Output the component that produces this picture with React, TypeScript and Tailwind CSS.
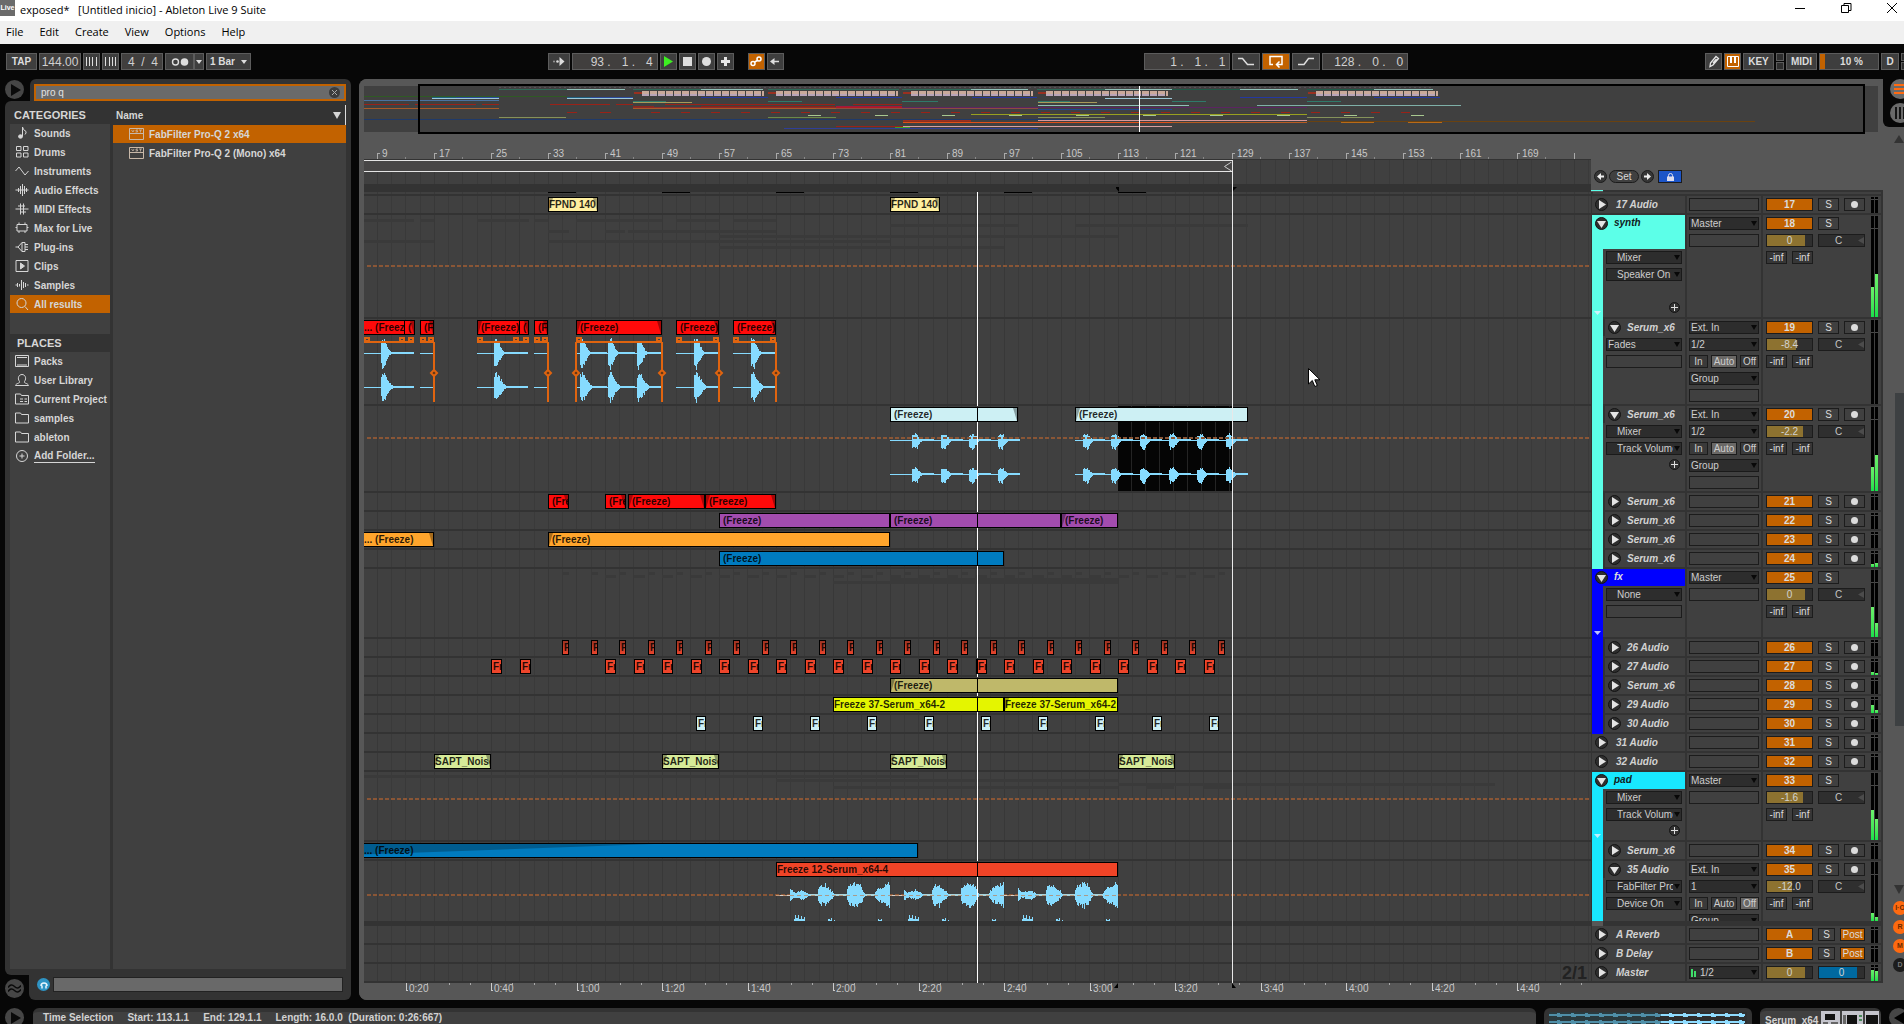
import React from "react";

/* ---------- shared pieces ---------- */

const field =
  "flex h-[13px] shrink-0 items-center justify-center overflow-hidden border border-[#1c1c1c] text-[10px] leading-[11px] whitespace-nowrap";

function Triangle({ dir, className }: { dir: "up" | "down" | "right"; className: string }) {
  const d = { up: "M0 10 5 0 10 10Z", down: "M0 0H10L5 10Z", right: "M0 0 10 5 0 10Z" }[dir];
  return (
    <svg viewBox="0 0 10 10" preserveAspectRatio="none" className={"shrink-0 " + className} fill="currentColor" aria-hidden="true">
      <path d={d} />
    </svg>
  );
}

function Chooser({ value, label, indent, meter }: { value: string; label: string; indent?: boolean; meter?: boolean }) {
  return (
    <div className="relative h-[13px] w-full shrink-0">
      <select
        aria-label={label}
        className={
          "block h-[13px] w-full appearance-none overflow-hidden border border-[#1a1a1a] bg-[#2d2d2d] py-0 pr-2 text-[10px] leading-[11px] text-clip whitespace-nowrap text-[#cdcdcd] " +
          (indent || meter ? "pl-[10px]" : "pl-px")
        }
      >
        <option>{value}</option>
      </select>
      {meter && (
        <span className="pointer-events-none absolute bottom-0.5 left-0.5 flex items-end gap-px">
          <span className="h-2 w-0.5 bg-[#3fdc6a]" />
          <span className="h-1.5 w-0.5 bg-[#3fdc6a]" />
        </span>
      )}
      <Triangle dir="down" className="pointer-events-none absolute top-1 right-0.5 h-[5px] w-[6px] text-[#080808]" />
    </div>
  );
}

/* ---------- title, menu, transport ---------- */

function TitleBar() {
  return (
    <header className="flex h-[21px] shrink-0 items-start bg-white text-black">
      <span className="flex h-4 w-[15px] items-center justify-center bg-[#6b6b6b] text-[7px] font-bold text-white">
        Live
      </span>
      <h1 className="ml-[5px] flex-1 font-['Open_Sans','Noto_Sans',sans-serif] text-[11px] leading-5 whitespace-pre">
        exposed*{"   "}[Untitled inicio] - Ableton Live 9 Suite
      </h1>
      <div className="flex gap-[22px]">
        <button aria-label="Minimize" className="flex h-4 w-6 items-center justify-center">
          <svg width="10" height="10" stroke="#000" aria-hidden="true"><path d="M0 5.5H10" /></svg>
        </button>
        <button aria-label="Restore" className="flex h-4 w-6 items-center justify-center">
          <svg width="11" height="11" stroke="#000" fill="none" aria-hidden="true"><path d="M.5 2.5h7v7h-7zM3 2.5V.5h7v7H8" /></svg>
        </button>
        <button aria-label="Close" className="flex h-4 w-6 items-center justify-center">
          <svg width="10" height="10" stroke="#000" aria-hidden="true"><path d="M0 0 10 10M10 0 0 10" /></svg>
        </button>
      </div>
    </header>
  );
}

function MenuBar() {
  return (
    <nav className="flex h-[23px] shrink-0 items-start gap-4 bg-[#f0f0f0] pl-1.5 font-['Open_Sans','Noto_Sans',sans-serif] text-[11px] text-black">
      {["File", "Edit", "Create", "View", "Options", "Help"].map((m) => (
        <button key={m} className="leading-[22px]">{m}</button>
      ))}
    </nav>
  );
}

function TBtn({ w, label, on, children }: { w: string; label?: string; on?: boolean; children?: React.ReactNode }) {
  return (
    <button
      aria-label={label}
      className={
        "flex h-[17px] shrink-0 items-center justify-center border border-[#5c5c5c] text-[10px] font-bold text-[#dcdcdc] " +
        (on ? "bg-[#c26200] " : "bg-[#3e3e3e] ") + w
      }
    >
      {children}
    </button>
  );
}

function Readout({ parts, w, label }: { parts: string[]; w: string; label: string }) {
  return (
    <div aria-label={label} className={"flex h-[17px] shrink-0 items-center justify-between border border-[#5c5c5c] bg-[#413f3e] pr-1 text-[12px] leading-none text-[#d0d0d0] " + w}>
      {parts.map((p, i) => <span key={i} className="whitespace-pre">{p}</span>)}
    </div>
  );
}

function Transport() {
  return (
    <div className="flex h-[35px] shrink-0 items-start pt-[9px] pl-1.5">
      <div className="flex gap-0.5">
        <TBtn w="w-[31px]">TAP</TBtn>
        <input aria-label="Tempo" defaultValue="144.00" className="h-[17px] w-[42px] border border-[#5c5c5c] bg-[#413f3e] text-center text-[12px] leading-none text-[#d0d0d0]" />
        <TBtn w="w-[17px]" label="Nudge down"><svg width="11" height="9" stroke="#ddd" aria-hidden="true"><path d="M.5 0V9M3.5 0V9M6.5 0V9M10.5 0V9" /></svg></TBtn>
        <TBtn w="w-[17px]" label="Nudge up"><svg width="11" height="9" stroke="#ddd" aria-hidden="true"><path d="M.5 0V9M4.5 0V9M7.5 0V9M10.5 0V9" /></svg></TBtn>
        <Readout w="w-[42px] pl-1.5" label="Time signature" parts={["4", "/", "4"]} />
        <div className="flex">
          <TBtn w="w-[29px]" label="Metronome">
            <svg width="18" height="8" aria-hidden="true"><circle cx="4.5" cy="4" r="3" fill="none" stroke="#ddd" strokeWidth="1.4" /><circle cx="13.5" cy="4" r="3.8" fill="#ddd" /></svg>
          </TBtn>
          <TBtn w="w-[10px]" label="Metronome options"><Triangle dir="down" className="h-1 w-1.5" /></TBtn>
        </div>
        <div className="relative h-[17px]">
          <select aria-label="Quantization" className="block h-[17px] w-[45px] appearance-none border border-[#5c5c5c] bg-[#3e3e3e] py-0 pl-[3px] text-[10px] leading-[15px] font-bold text-[#dcdcdc]"><option>1 Bar</option></select>
          <Triangle dir="down" className="pointer-events-none absolute top-[7px] right-1 h-1 w-1.5 text-[#ddd]" />
        </div>
      </div>
      <div className="flex-[297]" />
      <div className="flex gap-0.5">
        <TBtn w="w-[22px]" label="Follow">
          <svg width="12" height="9" fill="#ddd" aria-hidden="true"><circle cx="1" cy="4.5" r="1" fill="#999" /><circle cx="4.5" cy="4.5" r="1.3" /><path d="M6.5 3.5V0l5 4.500-5 4.500V5.500z" /></svg>
        </TBtn>
        <Readout w="w-[86px] pl-[18px]" label="Arrangement position" parts={["93 .", "1 .", "4"]} />
        <TBtn w="w-[17px]" label="Play"><Triangle dir="right" className="h-[11px] w-[9px] text-[#3dee22]" /></TBtn>
        <TBtn w="w-[17px]" label="Stop"><span className="size-[9px] bg-[#ddd]" /></TBtn>
        <TBtn w="w-[17px]" label="Record"><span className="size-[9px] rounded-full bg-[#ddd]" /></TBtn>
        <TBtn w="w-[17px]" label="Overdub"><svg width="9" height="9" stroke="#e6e6e6" strokeWidth="3" aria-hidden="true"><path d="M0 4.500H9M4.500 0V9" /></svg></TBtn>
        <div className="w-2.5" />
        <TBtn w="w-[17px]" label="Automation arm" on>
          <svg width="12" height="11" fill="none" stroke="#fff" strokeWidth="1.500" aria-hidden="true"><circle cx="3" cy="7.500" r="2" /><circle cx="9" cy="3" r="2" /><path d="M4.500 6 7.500 4.500" /></svg>
        </TBtn>
        <TBtn w="w-[17px]" label="Re-enable automation">
          <svg width="10" height="9" fill="#ddd" aria-hidden="true"><path d="M0 4.500 4.500 1V3.700H9V5.300H4.500V8z" /></svg>
        </TBtn>
      </div>
      <div className="flex-[361]" />
      <div className="flex gap-0.5">
        <Readout w="w-[86px] pl-[25px]" label="Loop start" parts={["1 .", "1 .", "1"]} />
        <TBtn w="w-[28px]" label="Punch in"><svg width="16" height="10" fill="none" stroke="#ddd" strokeWidth="1.500" aria-hidden="true"><path d="M0 1.500H4.500L9.500 7.500H16" /></svg></TBtn>
        <TBtn w="w-[28px]" label="Loop" on>
          <svg width="14" height="13" fill="none" stroke="#fff" strokeWidth="1.500" aria-hidden="true"><path d="M4 9.500H1V1.500H13V9.500H8M10.500 6.500 7.500 9.500 10.500 12.500" /></svg>
        </TBtn>
        <TBtn w="w-[28px]" label="Punch out"><svg width="16" height="10" fill="none" stroke="#ddd" strokeWidth="1.500" aria-hidden="true"><path d="M0 7.500H6L10.500 1.500H16" /></svg></TBtn>
        <Readout w="w-[86px] pl-[11px]" label="Loop length" parts={["128 .", "0 .", "0"]} />
      </div>
      <div className="flex-[297]" />
      <div className="flex gap-0.5">
        <TBtn w="w-[17px]" label="Draw mode">
          <svg width="12" height="13" fill="none" stroke="#e6e6e6" strokeWidth="1.300" aria-hidden="true"><path d="M2 11.500 2.500 8 8 1.500 10.500 3.500 5 10zM5 8 8.500 4" /></svg>
        </TBtn>
        <TBtn w="w-[17px]" label="Computer MIDI keyboard" on>
          <svg width="12" height="11" aria-hidden="true"><path d="M.5.5h11v10H.5z" fill="none" stroke="#fff" /><path d="M4 1V7M8 1V7" stroke="#fff" strokeWidth="2" /></svg>
        </TBtn>
        <TBtn w="w-[31px]">KEY</TBtn>
        <div className="flex h-[17px] flex-col gap-px">
          <span className="h-2 w-2 border border-[#5c5c5c] bg-[#2e2e2e]" />
          <span className="h-2 w-2 border border-[#5c5c5c] bg-[#2e2e2e]" />
        </div>
        <TBtn w="w-[31px]">MIDI</TBtn>
        <div className="flex h-[17px] w-[60px] items-center border border-[#5c5c5c] bg-[#3e3e3e] text-[10px] font-bold text-[#dcdcdc]">
          <span className="h-full w-[5px] bg-[#c26200]" />
          <span className="flex-1 text-center">10 %</span>
        </div>
        <TBtn w="w-[18px]">D</TBtn>
        <div className="flex h-[17px] flex-col gap-px">
          <span className="h-2 w-[3px] border-y border-l border-[#5c5c5c] bg-[#2e2e2e]" />
          <span className="h-2 w-[3px] border-y border-l border-[#5c5c5c] bg-[#2e2e2e]" />
        </div>
      </div>
    </div>
  );
}

/* ---------- browser ---------- */

const catIcons: Record<string, React.ReactNode> = {
  Sounds: <><path d="M7.500 10V1Q8 4 11 5.500 11.500 7 10 8.500" /><ellipse cx="5.500" cy="10.500" rx="2" ry="1.700" fill="currentColor" /></>,
  Drums: <path d="M1.500 1.500h4.500v4H1.500zM8.500 1.500h4.500v4H8.500zM1.500 8h4.500v4H1.500zM8.500 8h4.500v4H8.500z" />,
  Instruments: <path d="M.5 7 4 3 10 11 13.500 7" />,
  "Audio Effects": <path d="M.5 7H13.500M3.500 5V9M5.500 3V11M7.500 1V13M9.500 3V11M11.500 5V9" />,
  "MIDI Effects": <path d="M.5 7H13.500M3 4H10M5 10H11M5.500 1.500V12.500M8.500 1.500V12.500" />,
  "Max for Live": <path d="M2 3.500H12V10H2zM.5 6.500H2M12 6.500h1.500M4 1.500V3.500M10 1.500V3.500M4 10V12M10 10V12" />,
  "Plug-ins": <path d="M.5 7H3L7 2.500V11.500L3 7M7 2.500H10V11.500H7M10 4.500H13M10 7H13M10 9.500H13" />,
  Clips: <><path d="M1 1.500H13V12.500H1z" /><path d="M5.500 4 9.500 7 5.500 10z" fill="currentColor" /></>,
  Samples: <path d="M.5 7H2M2.500 5V9M4.500 6V8.500M6.500 2V12M8.500 4V10M10.500 5V9M12 7h1.500" />,
  "All results": <path d="M6.500 1.500a4.500 4.500 0 1 1 0 9 4.500 4.500 0 0 1 0-9M10 9.500 13 13" />,
  Packs: <path d="M.5 1.500H13.500V12.500H.5zM2 3.500H12M2 11H12" />,
  "User Library": <path d="M.5 12.500C1 10 5.500 10.500 4.500 8.500 2 5 4 1.500 7 1.500S12 5 9.500 8.500C8.500 10.500 13 10 13.500 12.500z" />,
  "Current Project": <path d="M.5 12V2H5.500L6.500 3.500H13.500V12zM5 7H8M9.500 7H12M5 9.500H8M9.500 9.500H12" />,
  folder: <path d="M.5 12V2H5.500L6.500 3.500H13.500V12z" />,
  "Add Folder...": <><circle cx="7" cy="7" r="5.500" /><path d="M4.500 7H9.500M7 4.500V9.500" /></>,
};

function CatRow({ name, on, icon, link }: { name: string; on?: boolean; icon?: string; link?: boolean }) {
  return (
    <li>
      <button className={"flex h-[18px] w-full items-center gap-[5px] pl-[5px] text-[10px] font-bold whitespace-nowrap text-[#d6d6d6] " + (on ? "bg-[#c26200]" : "")}>
        <svg width="14" height="14" viewBox="0 0 14 14" fill="none" stroke="currentColor" aria-hidden="true">{catIcons[icon || name]}</svg>
        <span className={link ? "border-y border-t-transparent border-b-[#d6d6d6] leading-3" : ""}>{name}</span>
      </button>
    </li>
  );
}

function RoundIcon({ children, label }: { children: React.ReactNode; label: string }) {
  return (
    <button aria-label={label} className="flex size-[19px] shrink-0 items-center justify-center rounded-full bg-[#464646] text-[#0a0a0a]">
      {children}
    </button>
  );
}

function VstIcon() {
  return (
    <svg width="15" height="12" viewBox="0 0 15 12" fill="none" stroke="#c8b8a8" aria-hidden="true">
      <path d="M.5.5h14v11H.5zM.5 5.500h14" /><path d="M2.500 2 4 4 5 2M9 2H7v1h1.500v1H6.500M10 2h3M11.500 2V4.500" strokeWidth=".8" />
    </svg>
  );
}

function Browser() {
  return (
    <section aria-label="Browser" className="flex w-[346px] shrink-0 flex-col">
      <div className="flex h-[22px] shrink-0">
        <div className="w-[25px] pt-px"><RoundIcon label="Show browser"><Triangle dir="right" className="ml-0.5 h-3 w-2.5" /></RoundIcon></div>
        <div className="flex flex-1 rounded-t-md bg-[#333] pt-[5px] pr-[5px] pl-1">
          <div className="flex h-[17px] flex-1 items-center border-2 border-[#c26200] bg-[#6a6a6a] pr-1">
            <input aria-label="Search" defaultValue="pro q" className="h-full min-w-0 flex-1 bg-transparent pl-[5px] text-[10px] text-[#e2e2e2]" />
            <button aria-label="Clear search" className="flex size-[11px] items-center justify-center rounded-full bg-[#3c3c3c]">
              <svg width="5" height="5" stroke="#aaa" aria-hidden="true"><path d="M0 0 5 5M5 0 0 5" /></svg>
            </button>
          </div>
        </div>
      </div>
      <div className="flex min-h-0 flex-1 gap-[3px] rounded-tl-md rounded-bl-md bg-[#333] px-[5px] pb-1.5 text-[#d6d6d6]">
        <div className="flex w-[100px] shrink-0 flex-col">
          <h2 className="h-[23px] pt-1 pl-1 text-[11px] leading-5 font-bold">CATEGORIES</h2>
          <ul className="flex flex-col gap-px bg-[#404040] pb-[21px]">
            {["Sounds", "Drums", "Instruments", "Audio Effects", "MIDI Effects", "Max for Live", "Plug-ins", "Clips", "Samples"].map((c) => (
              <CatRow key={c} name={c} />
            ))}
            <CatRow name="All results" on />
          </ul>
          <h2 className="h-[18px] shrink-0 pl-[7px] text-[11px] leading-[18px] font-bold">PLACES</h2>
          <ul className="flex flex-1 flex-col gap-px bg-[#404040]">
            <CatRow name="Packs" />
            <CatRow name="User Library" />
            <CatRow name="Current Project" />
            <CatRow name="samples" icon="folder" />
            <CatRow name="ableton" icon="folder" />
            <CatRow name="Add Folder..." link />
          </ul>
        </div>
        <div className="flex flex-1 flex-col">
          <div className="flex h-6 items-center justify-between pt-1 pl-[3px] text-[10px] font-bold">
            Name
            <span className="flex h-full items-center gap-1 border-r border-[#ddd] pr-1"><Triangle dir="down" className="h-[7px] w-2" /></span>
          </div>
          <ul className="flex-1 bg-[#404040] text-[10px] font-bold">
            <li className="flex h-[18px] items-center gap-[5px] bg-[#c26200] pl-4"><VstIcon />FabFilter Pro-Q 2 x64</li>
            <li className="mt-px flex h-[18px] items-center gap-[5px] pl-4"><VstIcon />FabFilter Pro-Q 2 (Mono) x64</li>
          </ul>
        </div>
      </div>
      <div className="flex h-[25px] shrink-0">
        <div className="w-6 pt-1"><RoundIcon label="Groove pool"><svg width="13" height="9" fill="none" stroke="#0a0a0a" strokeWidth="1.500" aria-hidden="true"><path d="M0 3.500Q3-1 6.500 2.500T13 1.500M0 7.500Q3 3 6.500 6.500T13 5.500" /></svg></RoundIcon></div>
        <div className="flex flex-1 items-start gap-[3px] rounded-b-md bg-[#333] pt-0.5 pr-2 pl-2">
          <button aria-label="Preview" className="mt-px flex size-[13px] items-center justify-center rounded-full bg-[#2f94c4]">
            <svg width="10" height="10" fill="none" stroke="#e8f6ff" strokeWidth="1.500" aria-hidden="true"><path d="M2 6a3 3 0 1 1 6 0M3 5.500V8.500M7 5.500V8.500" /></svg>
          </button>
          <div className="h-[15px] flex-1 border border-[#222] bg-[#696969]" />
        </div>
      </div>
    </section>
  );
}

/* ---------- timeline data ---------- */

type Fade = "l" | "r" | "lr";
type Clip = { x: number; w: number; t: string; c: string; f?: Fade };

const BAR = 7.125;
const ORIGIN = 13.4;
const PLAYHEAD = 613;

const RED = "bg-[#ff0a0a]";
const ICE = "bg-[#cdf0f4]";
const PURPLE = "bg-[#a24cae]";
const ORANGE = "bg-[#ffa52c]";
const BLUE = "bg-[#007bbf]";
const VERM = "bg-[#ee452b]";
const VERM_DIM = "bg-linear-to-b from-[#9c3424] to-[#e8442c]";

const every = (n: number, start: number, step: number, w: number, t: string, c: string, f?: Fade): Clip[] =>
  Array.from({ length: n }, (_, i) => ({ x: Math.round(start + i * step), w, t, c, f }));

type Track = {
  name: string;
  num?: string;
  h: number;
  kind: "mini" | "group" | "open";
  strip?: "synth" | "fx" | "pad";
  nested?: boolean;
  headTall?: boolean;
  devices?: (string | null)[];
  plus?: boolean;
  io?: string[];
  monitor?: "In" | "Auto" | "Off";
  vol?: string;
  fill?: number;
  levels?: [number, number];
  clips?: Clip[];
  auto?: number;
  ghosts?: number[][];
  ret?: boolean;
  thick?: boolean;
};

const tracks: Track[] = [
  {
    name: "17 Audio", num: "17", h: 19, kind: "mini",
    clips: [{ x: 184, w: 50, t: "FPND 140", c: "bg-[#fff0a0]", f: "lr" }, { x: 526, w: 50, t: "FPND 140", c: "bg-[#fff0a0]", f: "lr" }],
  },
  {
    name: "synth", num: "18", h: 104, kind: "group", strip: "synth", headTall: true, devices: ["Mixer", "Speaker On"], plus: true,
    io: ["Master", ""], vol: "0", fill: 84, levels: [30, 43], auto: 51,
    ghosts: [[0, 4, 50], [56, 4, 14], [113, 4, 52], [170, 4, 14], [212, 4, 86], [312, 4, 43], [369, 4, 43], [526, 9, 128], [711, 9, 173], [184, 15, 21], [241, 15, 20], [264, 15, 148], [355, 20, 399], [0, 25, 70], [184, 25, 342], [355, 31, 285]],
  },
  {
    name: "Serum_x6", num: "19", h: 87, kind: "open", strip: "synth", nested: true, devices: ["=Fades", null],
    io: ["Ext. In", "1/2", "*", "Group", ""], monitor: "Auto", vol: "-8.4", fill: 64,
    clips: [
      { x: -1, w: 42, t: "... (Freez", c: RED }, { x: 40, w: 11, t: "(", c: RED, f: "r" }, { x: 56, w: 14, t: "(F", c: RED, f: "r" },
      { x: 113, w: 43, t: "(Freeze)", c: RED, f: "l" }, { x: 155, w: 10, t: "(", c: RED, f: "r" }, { x: 170, w: 14, t: "(F", c: RED, f: "r" },
      { x: 212, w: 86, t: "(Freeze)", c: RED, f: "lr" }, { x: 312, w: 43, t: "(Freeze)", c: RED, f: "r" }, { x: 369, w: 43, t: "(Freeze)", c: RED, f: "r" },
    ],
  },
  {
    name: "Serum_x6", num: "20", h: 87, kind: "open", strip: "synth", nested: true, devices: ["Mixer", "Track Volume"], plus: true,
    io: ["Ext. In", "1/2", "*", "Group", ""], monitor: "Auto", vol: "-2.2", fill: 80, levels: [24, 36], auto: 32,
    clips: [{ x: 526, w: 128, t: "(Freeze)", c: ICE, f: "r" }, { x: 711, w: 173, t: "(Freeze)", c: ICE, f: "l" }],
  },
  {
    name: "Serum_x6", num: "21", h: 19, kind: "mini", strip: "synth", nested: true,
    clips: [{ x: 184, w: 21, t: "(Fre", c: RED, f: "r" }, { x: 241, w: 21, t: "(Fre", c: RED, f: "r" }, { x: 264, w: 77, t: "(Freeze)", c: RED, f: "lr" }, { x: 341, w: 71, t: "(Freeze)", c: RED, f: "lr" }],
  },
  {
    name: "Serum_x6", num: "22", h: 19, kind: "mini", strip: "synth", nested: true,
    clips: [{ x: 355, w: 171, t: "(Freeze)", c: PURPLE }, { x: 526, w: 171, t: "(Freeze)", c: PURPLE }, { x: 697, w: 57, t: "(Freeze)", c: PURPLE, f: "l" }],
  },
  {
    name: "Serum_x6", num: "23", h: 19, kind: "mini", strip: "synth", nested: true,
    clips: [{ x: -1, w: 71, t: "... (Freeze)", c: ORANGE, f: "r" }, { x: 184, w: 342, t: "(Freeze)", c: ORANGE, f: "l" }],
  },
  { name: "Serum_x6", num: "24", h: 19, kind: "mini", strip: "synth", nested: true, levels: [3, 4], clips: [{ x: 355, w: 285, t: "(Freeze)", c: BLUE }] },
  {
    name: "fx", num: "25", h: 70, kind: "group", strip: "fx", devices: ["None", null], io: ["Master", ""], vol: "0", fill: 84, levels: [30, 14],
    ghosts: [...Array.from({ length: 24 }, (_, i) => [198 + Math.round(i * 28.5), 3, 7]), ...Array.from({ length: 22 }, (_, i) => [241 + Math.round(i * 28.5), 6, 11]), [526, 9, 228], [469, 12, 285]],
  },
  { name: "26 Audio", num: "26", h: 19, kind: "mini", strip: "fx", nested: true, clips: every(24, 198, 28.5, 7, "F", VERM_DIM) },
  { name: "27 Audio", num: "27", h: 19, kind: "mini", strip: "fx", nested: true, levels: [3, 2], clips: [...every(2, 127, 28.5, 11, "Fr", VERM), ...every(22, 241, 28.5, 11, "Fr", VERM)] },
  { name: "Serum_x6", num: "28", h: 19, kind: "mini", strip: "fx", nested: true, clips: [{ x: 526, w: 228, t: "(Freeze)", c: "bg-[#bfb86a]", f: "l" }] },
  {
    name: "29 Audio", num: "29", h: 19, kind: "mini", strip: "fx", nested: true, levels: [8, 3],
    clips: [{ x: 469, w: 171, t: "Freeze 37-Serum_x64-2", c: "bg-[#e4f500]" }, { x: 640, w: 114, t: "Freeze 37-Serum_x64-2", c: "bg-[#e4f500]", f: "l" }],
  },
  { name: "30 Audio", num: "30", h: 19, kind: "mini", strip: "fx", nested: true, clips: every(10, 332, 57, 10, "Fr", ICE) },
  { name: "31 Audio", num: "31", h: 19, kind: "mini" },
  { name: "32 Audio", num: "32", h: 19, kind: "mini", clips: [70, 298, 526, 754].map((x) => ({ x, w: 57, t: "SAPT_Noise", c: "bg-[#d6ea98]", f: "lr" as Fade })) },
  {
    name: "pad", num: "33", h: 70, kind: "group", strip: "pad", devices: ["Mixer", "Track Volume"], plus: true, io: ["Master", ""], vol: "-1.6", fill: 80,
    levels: [30, 21], auto: 27, ghosts: [[0, 3, 554], [412, 7, 342], [469, 14, 285], [754, 11, 377], [782, 14, 28], [840, 14, 28]],
  },
  { name: "Serum_x6", num: "34", h: 19, kind: "mini", strip: "pad", nested: true, clips: [{ x: -1, w: 555, t: "... (Freeze)", c: BLUE }] },
  {
    name: "35 Audio", num: "35", h: 65, kind: "open", strip: "pad", nested: true, thick: true, devices: ["FabFilter Pro-Q", "Device On"],
    io: ["Ext. In", "1", "*", "Group"], monitor: "Off", vol: "-12.0", fill: 56, levels: [8, 4], auto: 34,
    clips: [{ x: 412, w: 342, t: "Freeze 12-Serum_x64-4", c: "bg-[#f04427]" }],
  },
  { name: "A Reverb", num: "A", h: 19, kind: "mini", ret: true },
  { name: "B Delay", num: "B", h: 19, kind: "mini", ret: true },
  { name: "Master", h: 19, kind: "mini", io: ["1/2"], vol: "0", fill: 84, levels: [11, 10] },
];

/* ---------- wave forms ---------- */

const noise = (i: number) => {
  const v = Math.sin(i * 12.9898) * 43758.5453;
  return v - Math.floor(v);
};

function columns(x: number, cy: number, up: number[], down: number[]) {
  return up.map((u, i) => {
    const a = Math.max(1, Math.round(u * (0.75 + 0.4 * noise(x + i))));
    const b = Math.max(1, Math.round(down[i] * (0.75 + 0.4 * noise(x * 3 + i))));
    return `M${x + i} ${cy - a}h1v${a + b}h-1z`;
  }).join("");
}

function Wave19() {
  const env = [13, 15, 15, 14, 11, 9, 7, 5, 3, 2, 1];
  const low = [11, 13, 14, 13, 12, 10, 8, 7, 5, 4, 3, 2, 1];
  const hits = [17, 130, 216, 244, 273, 330, 387];
  const spans = [[0, 50], [56, 13], [113, 51], [170, 13], [212, 86], [312, 43], [369, 43]];
  const ends = [70, 184, 212, 298, 355, 412];
  const folds = [[0, 50], [56, 14], [113, 52], [170, 14], [212, 86], [312, 43], [369, 43]];
  return (
    <svg className="absolute inset-0 h-full w-full" shapeRendering="crispEdges" aria-hidden="true">
      <g fill="#86dbff">
        {spans.map(([x, w]) => <path key={x} d={`M${x} 34h${w}v1h-${w}zM${x} 68h${w}v1h-${w}z`} />)}
        {hits.map((x, i) => {
          const len = [33, 34, 27, 27, 25, 24, 24][i];
          return (
            <g key={x}>
              <path d={columns(x, 34, env.map((v) => Math.min(v, 13)), env)} />
              <path d={columns(x, 68, low, low)} />
              <path d={`M${x} 33h${len}v2h-${len}zM${x} 67h${len}v2h-${len}z`} />
            </g>
          );
        })}
      </g>
      <g fill="none" stroke="#e0640f" strokeWidth="2">
        {folds.map(([x, w]) => (
          <path key={x} d={`M${x} 23h${w}`} />
        ))}
        {folds.map(([x, w]) => (
          <path key={x} d={`M${x + 1} 19h4v3h-4zM${x + w - 5} 19h4v3h-4z`} />
        ))}
        <path d="M36 19h4v3h-4zM150 19h4v3h-4z" />
        {ends.map((x) => <path key={x} d={`M${x} 23V83`} />)}
      </g>
      <g fill="#5a3418" stroke="#e0640f" strokeWidth="2" shapeRendering="auto">
        {ends.map((x) => <path key={x} d={`M${x} 51l3 3-3 3-3-3z`} />)}
      </g>
    </svg>
  );
}

function Wave20() {
  const env = [7, 9, 8, 9, 9, 8, 6, 5, 3, 2];
  const hits = [548, 577, 605, 634, 719, 747, 776, 805, 833, 862];
  return (
    <>
      <div className="absolute top-0 left-[754px] h-full w-[114px] bg-[#050505]">
        <div className="h-full bg-[linear-gradient(90deg,transparent_13px,#242424_13px)] bg-[length:14px_100%]" />
      </div>
      <svg className="absolute inset-0 h-full w-full" shapeRendering="crispEdges" fill="#86dbff" aria-hidden="true">
        {[[526, 128], [711, 173]].map(([x, w]) => <path key={x} d={`M${x} 34h${w}v1h-${w}zM${x} 68h${w}v1h-${w}z`} />)}
        {hits.map((x) => (
          <g key={x}>
            <path d={columns(x, 34, env.map((v) => v * 0.65), env)} />
            <path d={columns(x, 68, env.map((v) => v * 0.65), env)} />
            <path d={`M${x} 33h22v2h-22zM${x} 67h22v2h-22z`} />
          </g>
        ))}
      </svg>
    </>
  );
}

function Wave35() {
  const shapes: [number, number[]][] = [
    [14, [6, 5, 4, 3, 3, 3, 3, 4, 4, 4, 4, 5, 4, 4, 4, 3, 3, 2, 1, 1]],
    [42, [6, 8, 11, 10, 9, 10, 9, 11, 8, 7, 7, 6, 5, 4, 4, 2, 1]],
    [71, [6, 8, 9, 10, 10, 11, 11, 12, 11, 12, 11, 10, 11, 10, 8, 6, 3, 2]],
    [99, [3, 4, 5, 6, 7, 7, 8, 8, 9, 9, 10, 11, 12, 12, 12]],
  ];
  return (
    <svg className="absolute inset-0 h-full w-full" shapeRendering="crispEdges" fill="#86dbff" aria-hidden="true">
      {[412, 526, 640].map((s) => (
        <g key={s}>
          <path d={`M${s} 34h14v1h-14z`} fill="#d8d0c8" />
          <path d={`M${s + 14} 33h100v2h-100z`} fill="#a9d4dc" />
          {shapes.map(([o, env]) => <path key={o} d={columns(s + o, 34, env, env)} />)}
          <path d={`M${s + 18} 60v-2h1v-4h1v3h2v-3h1v4h2v-3h1v3h2v-2h1v4zM${s + 52} 60v-2h2v1h1v-2h1v3h2v-1h1v1zM${s + 102} 60v-2h1v1h2v-1h1v2z`} />
        </g>
      ))}
      <path d="M412 34.500h342" stroke="#b98058" strokeDasharray="4 3" opacity=".7" fill="none" />
    </svg>
  );
}

/* ---------- lanes ---------- */

const grid =
  "bg-[#404040] bg-[linear-gradient(90deg,#383838_1px,transparent_1px_14px,#3a3a3a_14px_15px,transparent_15px_28px,#393939_28px_29px,transparent_29px_43px,#3a3a3a_43px_44px,transparent_44px)] bg-[length:57px_100%] bg-[position:13px_0]";

function ClipView({ clip }: { clip: Clip }) {
  const crosses = clip.x < PLAYHEAD && clip.x + clip.w > PLAYHEAD;
  return (
    <div
      className={
        "absolute top-px h-[15px] overflow-hidden border border-black text-[10px] leading-[13px] font-bold whitespace-nowrap text-black/85 " +
        clip.c + (clip.t[0] === "(" ? " pl-[3px]" : clip.w < 12 ? " pl-px" : "")
      }
      style={{ left: clip.x, width: clip.w }}
    >
      {clip.w > 500 && <div className="absolute inset-y-0 left-0 w-[290px] bg-black/25 [clip-path:polygon(0_0,100%_0,0_80%)]" />}
      {(clip.f === "l" || clip.f === "lr") && <div className="absolute top-0 left-0 h-full w-1 bg-black/35 [clip-path:polygon(0_0,100%_0,0_100%)]" />}
      {(clip.f === "r" || clip.f === "lr") && <div className="absolute top-0 right-0 h-full w-1 bg-black/35 [clip-path:polygon(0_0,100%_0,100%_100%)]" />}
      <span className="relative">{clip.t}</span>
      {crosses && <div className="absolute inset-y-0 w-px bg-black" style={{ left: PLAYHEAD - clip.x - 1 }} />}
    </div>
  );
}

function Lane({ track }: { track: Track }) {
  return (
    <div className={"relative min-w-0 flex-1 overflow-hidden border-[#333] " + grid + (track.thick ? " border-b-[5px]" : " border-b-2")}>
      {track.ghosts?.map(([x, y, w]) => <div key={x + "-" + y} className="absolute h-[3px] bg-[#3a3a3a]" style={{ left: x, top: y, width: w }} />)}
      {track.num === "20" && <Wave20 />}
      {track.auto !== undefined && (
        <div className="absolute right-0 left-[3px] h-0.5 bg-[linear-gradient(90deg,#8a5636_4px,transparent_4px)] bg-[length:6px_2px]" style={{ top: track.auto - 1 }} />
      )}
      {track.num === "19" && <Wave19 />}
      {track.num === "35" && <Wave35 />}
      {track.clips?.map((c) => <ClipView key={c.x} clip={c} />)}
    </div>
  );
}

/* ---------- mixer strip of each track ---------- */

const stripBg = { synth: "bg-[#5cffe8]", fx: "bg-[#0000ff]", pad: "bg-[#18e8ff]" };

function Fold({ open }: { open: boolean }) {
  return (
    <button aria-label={open ? "Fold track" : "Unfold track"} className="flex size-[13px] shrink-0 items-center justify-center rounded-full border border-[#141414] bg-[#2e2e2e] text-[#e4e4e4]">
      {open ? <Triangle dir="down" className="mt-px h-[7px] w-[9px]" /> : <Triangle dir="right" className="ml-px h-[9px] w-[7px]" />}
    </button>
  );
}

function Devices({ track }: { track: Track }) {
  if (!track.devices) return null;
  return (
    <div className="flex min-w-0 flex-1 flex-col gap-1 pr-[3px] pl-[3px]">
      {track.devices.map((d, i) =>
        d === null ? (
          <div key={i} className={field} />
        ) : (
          <Chooser key={i} value={d.replace("=", "")} label={track.name + " device " + (i + 1)} indent={!d.startsWith("=")} />
        )
      )}
      {track.plus && (
        <button aria-label="Add automation lane" className={"mr-0.5 flex size-[11px] shrink-0 items-center justify-center self-end rounded-full border border-[#141414] bg-[#333] " + (track.headTall ? "mt-auto mb-1" : "")}>
          <svg width="7" height="7" stroke="#ddd" aria-hidden="true"><path d="M0 3.500H7M3.500 0V7" /></svg>
        </button>
      )}
    </div>
  );
}

function NameCell({ track }: { track: Track }) {
  const border = track.thick ? "border-b-[5px]" : "border-b-2";
  const strip = track.strip ? stripBg[track.strip] : "";
  if (track.kind === "group") {
    return (
      <div className="flex w-[93px] shrink-0 flex-col overflow-hidden">
        <div className={"flex shrink-0 items-start gap-1.5 pt-0.5 pl-[3px] " + strip + (track.headTall ? " h-[34px]" : " h-[17px]")}>
          <Fold open />
          <span className={"text-[10px] leading-3 font-bold italic " + (track.strip === "fx" ? "text-[#ddd]" : "text-[#102020]")}>{track.name}</span>
        </div>
        <div className="flex flex-1">
          <div className={"flex w-[11px] shrink-0 items-end justify-center pb-1 " + strip}>
            <Triangle dir="down" className="h-1 w-[7px] text-[#e8f0ff]/80" />
          </div>
          <div className={"flex min-w-0 flex-1 border-[#333] bg-[#404040] pt-0.5 " + border}><Devices track={track} /></div>
        </div>
      </div>
    );
  }
  return (
    <div className="flex w-[93px] shrink-0">
      {track.nested && <div className={"w-[11px] shrink-0 " + strip + (track.thick ? " mb-[5px]" : "")} />}
      <div className={"flex min-w-0 flex-1 flex-col overflow-hidden border-[#333] bg-[#404040] " + border}>
        <div className={"flex h-[17px] shrink-0 items-center " + (track.nested ? "gap-1.5 border-l-2 border-[#333] pl-[3px]" : "gap-2 pl-[3px]")}>
          <Fold open={track.kind === "open"} />
          <span className="text-[10px] leading-3 font-bold whitespace-nowrap text-[#d2d2d2] italic">{track.name}</span>
        </div>
        {track.devices && <div className="flex flex-1 pt-0.5"><Devices track={track} /></div>}
      </div>
    </div>
  );
}

function IoCell({ track }: { track: Track }) {
  return (
    <div className={"flex w-[76px] shrink-0 flex-col gap-1 overflow-hidden border-l-2 border-[#333] bg-[#404040] pt-0.5 pr-0.5 pl-0.5 " + (track.thick ? "border-b-[5px]" : "border-b-2")}>
      {(track.io || [""]).map((v, i) =>
        v === "*" ? (
          <div key={i} className="flex shrink-0 justify-between">
            {(["In", "Auto", "Off"] as const).map((m) => (
              <button key={m} className={field + " text-[#cdcdcd] " + (m === "Auto" ? "w-[26px] " : "w-[19px] ") + (track.monitor === m ? "bg-[#6a6866]" : "bg-[#3a3a3a]")}>{m}</button>
            ))}
          </div>
        ) : v === "" ? (
          <div key={i} className={field} />
        ) : (
          <Chooser key={i} value={v} label={track.name + " routing " + (i + 1)} meter={track.name === "Master"} />
        )
      )}
    </div>
  );
}

function ValueBox({ value, fill, label, blue }: { value: string; fill: number; label: string; blue?: boolean }) {
  return (
    <div className="relative h-[13px] w-[47px] shrink-0 overflow-hidden border border-[#1c1c1c] bg-[#2f2f2f]">
      <div className={"absolute inset-y-0 left-0 " + (blue ? "bg-[#0069a0]" : "bg-[#8d7230]")} style={{ width: fill + "%" }} />
      <input aria-label={label} defaultValue={value} className="absolute inset-0 w-full bg-transparent text-center text-[10px] leading-[11px] text-[#d2d2d2]" />
    </div>
  );
}

function MixCell({ track }: { track: Track }) {
  const master = track.name === "Master";
  return (
    <div className={"flex w-[109px] shrink-0 flex-col gap-1 overflow-hidden border-l-2 border-[#333] bg-[#404040] pt-0.5 pl-[3px] text-[#dcdcdc] " + (track.thick ? "border-b-[5px]" : "border-b-2")}>
      {master ? (
        <div className="flex gap-[5px]">
          <ValueBox value="0" fill={84} label="Master volume" />
          <ValueBox value="0" fill={84} blue label="Cue volume" />
        </div>
      ) : (
        <div className="flex gap-[5px]">
          <button aria-label={track.name + " activator"} className={field + " w-[47px] bg-[#c26200] font-bold"}>{track.num}</button>
          <button aria-label={"Solo " + track.name} className={field + (track.ret ? " w-[17px]" : " w-[21px]")}>S</button>
          {track.ret ? (
            <button className={field + " w-[25px] bg-[#c26200]"}>Post</button>
          ) : (
            track.kind !== "group" && (
              <button aria-label={"Arm " + track.name} className={field + " w-[21px]"}><span className="size-[7px] rounded-full bg-[#dcdcdc]" /></button>
            )
          )}
        </div>
      )}
      {track.kind !== "mini" && (
        <>
          <div className="flex gap-[5px]">
            <ValueBox value={track.vol!} fill={track.fill!} label={track.name + " volume"} />
            <div className={field + " relative w-[47px] bg-[#2f2f2f] pr-1.5 text-[#c4c4c4]"}>
              C
              <svg width="6" height="7" className="absolute top-0.5 right-0" fill="#4c4c4c" aria-hidden="true"><path d="M6 0V7L0 3.500z" /></svg>
            </div>
          </div>
          <div className="flex gap-[5px]">
            <div className={field + " w-[21px] bg-[#363636]"}>-inf</div>
            <div className={field + " w-[21px] bg-[#363636]"}>-inf</div>
          </div>
        </>
      )}
    </div>
  );
}

function MeterCell({ track }: { track: Track }) {
  const levels = track.levels || [0, 0];
  return (
    <div className={"flex w-[13px] shrink-0 gap-px border-r-2 border-[#333] bg-[#404040] pt-px pl-px " + (track.thick ? "border-b-[5px]" : "border-b-2")}>
      {levels.map((l, i) => (
        <div key={i} className="relative flex w-[3px] flex-col justify-end bg-black">
          <div className={"absolute left-0 h-px w-full bg-[#484848] " + (track.kind === "mini" ? "top-0.5" : "top-3")} />
          <div className="bg-linear-to-b from-[#6af06a] to-[#14e04a]" style={{ height: l }} />
        </div>
      ))}
    </div>
  );
}

function TrackRow({ track }: { track: Track }) {
  return (
    <div className="flex shrink-0" style={{ height: track.h }}>
      <Lane track={track} />
      <div className="flex w-[292px] shrink-0 border-l border-[#333]">
        <NameCell track={track} />
        <IoCell track={track} />
        <MixCell track={track} />
        <MeterCell track={track} />
      </div>
    </div>
  );
}

/* ---------- overview ---------- */

const ovLines: [number, number, number, string][] = [
  [0, 135, 10, "#2f5a24"], [0, 135, 14, "#4a72a0"], [0, 45, 18, "#9a2218"], [51, 112, 18, "#9a2218"], [118, 135, 18, "#9a2218"],
  [0, 135, 22, "#a85a28"], [0, 707, 33, "#1f3a6a"], [135, 203, 3, "#2d6a58"], [203, 261, 3, "#8fc0b8"], [68, 92, 11, "#1f6080"],
  [92, 135, 11, "#2c4c9c"], [68, 135, 12, "#9cc8d8"], [135, 203, 10, "#2f5a24"], [203, 227, 11, "#1f6080"], [227, 269, 11, "#2c4c9c"],
  [203, 269, 12, "#9cc8d8"], [135, 202, 31, "#85925a"], [186, 246, 18, "#9a2218"], [252, 269, 18, "#9a2218"], [203, 213, 26, "#9a2218"],
  [236, 247, 26, "#9a2218"], [269, 337, 3, "#2d6a58"], [337, 399, 3, "#8fc0b8"], [404, 535, 3, "#2d6a58"], [538, 607, 3, "#2d6a58"],
  [607, 664, 3, "#8fc0b8"], [673, 741, 3, "#2d6a58"], [741, 808, 3, "#8fc0b8"], [808, 876, 3, "#1f5a48"], [876, 934, 3, "#8fc0b8"],
  [943, 1010, 3, "#1f5a48"], [1010, 1069, 3, "#8fc0b8"], [337, 404, 11, "#2438a0"], [472, 538, 11, "#2438a0"], [608, 673, 11, "#2438a0"],
  [741, 808, 12, "#9cc8d8"], [876, 943, 11, "#2438a0"], [1010, 1076, 11, "#2438a0"], [269, 328, 16, "#a89a58"], [269, 302, 15, "#2f7a6a"],
  [404, 438, 15, "#2f7a6a"], [538, 574, 15, "#2f7a6a"], [674, 733, 16, "#a89a58"], [674, 706, 15, "#2f7a6a"], [808, 842, 15, "#2f7a6a"],
  [943, 977, 15, "#2f7a6a"], [301, 471, 18, "#9a2218"], [489, 538, 18, "#9a2218"], [269, 290, 20, "#8a2a1c"], [337, 471, 20, "#8a2418"], [472, 538, 20, "#a01840"],
  [269, 472, 21, "#8a2c2c"], [472, 538, 21, "#b01c20"], [269, 472, 22, "#a85a28"], [538, 943, 21, "#5c2462"], [472, 674, 22, "#8c4c40"], [674, 825, 19, "#8fc0b8"], [893, 1097, 19, "#7fb0a8"],
  [674, 808, 23, "#1f4a90"], [607, 943, 28, "#98a020"], [404, 472, 31, "#6a8a4a"], [674, 741, 31, "#85925a"], [943, 1010, 31, "#85925a"],
  [539, 607, 34, "#9a3020"], [674, 943, 34, "#d89898"], [539, 607, 35, "#8a3020"], [539, 808, 36, "#e05018"], [808, 943, 36, "#b85a20"], [943, 1391, 35, "#6a4210"],
  [977, 1010, 36, "#b86a18"], [1044, 1078, 36, "#b86a18"], [472, 539, 40, "#9a2218"], [539, 674, 40, "#d8a0a0"], [674, 808, 40, "#d8a0a0"],
  [531, 546, 41, "#3fa020"], [420, 674, 42, "#2f3f98"],
];

function Overview() {
  const blocks: [number, number][] = [[278, 15], [412, 15], [547, 15], [682, 15], [952, 15]];
  return (
    <div className="relative mr-[5px] flex h-[50px] shrink-0 items-center">
      <svg viewBox="0 0 1514 46" preserveAspectRatio="none" className="h-[46px] w-full bg-[#404040]" shapeRendering="crispEdges" aria-label="Arrangement overview">
        {ovLines.map(([a, b, y, c], i) => <path key={i} d={`M${a} ${y}H${b}V${y + 1}H${a}z`} fill={c} />)}
        {Array.from({ length: 26 }, (_, i) => <path key={i} d={`M${287 + i * 30} 26h9v1h-9z`} fill="#9a2218" />)}
        {Array.from({ length: 10 }, (_, i) => <path key={i} d={`M${444 + i * 67} 29h13v1h-13z`} fill="#a8c890" />)}
        <path d="M135 1H1070" stroke="#5a505a" strokeDasharray="2 3" />
        {blocks.map(([x, n]) => (
          <g key={x}>
            <path d={`M${x - 8} 6h8v2h-8z`} fill="#9a3020" />
            {Array.from({ length: n }, (_, i) => (
              <g key={i}>
                <path d={`M${x + i * 8} 5h7v3h-7z`} fill="#c9a99a" />
                <path d={`M${x + i * 8} 8h7v2h-7z`} fill="#b8a4b8" />
              </g>
            ))}
            <path d={`M${x + n * 8} 5h2v5h-2z`} fill="#c9a99a" />
          </g>
        ))}
        <path d="M775 0h1v46h-1z" fill="#fff" />
      </svg>
      <div className="absolute inset-y-0 right-[13px] left-[54px] border-2 border-black" />
    </div>
  );
}

/* ---------- arrangement ---------- */

const times = ["0:20", "0:40", "1:00", "1:20", "1:40", "2:00", "2:20", "2:40", "3:00", "3:20", "3:40", "4:00", "4:20", "4:40"];

function BarRuler() {
  return (
    <div className="relative h-[25px] overflow-hidden text-[10px] text-[#c8c8c8]">
      {Array.from({ length: 22 }, (_, i) => {
        const x = Math.round(ORIGIN + i * 8 * BAR);
        return (
          <React.Fragment key={i}>
            <div className={"absolute bottom-0 h-[6px] w-[3px] border-l border-[#aaa] " + (i < 21 ? "border-t" : "")} style={{ left: x }} />
            <div className="absolute bottom-0 h-0.5 w-px bg-[#888]" style={{ left: x + 28 }} />
            {i < 21 && <span className="absolute top-[14px] leading-3" style={{ left: x + 5 }}>{9 + i * 8}</span>}
          </React.Fragment>
        );
      })}
    </div>
  );
}

function TimeRuler() {
  return (
    <div className="relative h-[17px] shrink-0 overflow-hidden text-[10px] text-[#c8c8c8]">
      {times.map((t, i) => {
        const x = Math.round(41.5 + i * 12 * BAR);
        return (
          <React.Fragment key={t}>
            <div className="absolute top-0 h-2 w-0.5 border-b border-l border-[#ccc]" style={{ left: x }} />
            {[21, 43, 64].map((o) => <div key={o} className="absolute top-0 h-0.5 w-px bg-[#aaa]" style={{ left: x + o }} />)}
            <span className="absolute top-0 leading-3" style={{ left: x + 3 }}>{t}</span>
          </React.Fragment>
        );
      })}
    </div>
  );
}

function Playhead() {
  return (
    <div className="pointer-events-none absolute top-[58px] left-[613px] w-px">
      <div className="h-1 bg-white" />
      {tracks.map((t) => (
        <div key={t.name + t.num} className="flex flex-col" style={{ height: t.h }}>
          <div className={t.clips?.some((c) => c.x < PLAYHEAD && c.x + c.w > PLAYHEAD) ? "h-4" : "h-4 bg-white"} />
          <div className="flex-1 bg-white" />
        </div>
      ))}
    </div>
  );
}

function Arrangement() {
  return (
    <section aria-label="Arrangement" className="flex min-w-0 flex-1 flex-col rounded-l-lg rounded-tr-lg bg-[#575757] pt-[5px] pl-[5px]">
      <Overview />
      <div className="relative flex min-h-0 flex-1 flex-col">
        <div className="flex h-[58px] shrink-0">
          <div className="min-w-0 flex-1">
            <BarRuler />
            <div className={"h-[25px] border-t border-[#333] " + grid}>
              <div className="flex h-3 w-[869px] items-center justify-end border-y border-r border-[#e4e4e4] bg-[#474646]">
                <svg width="8" height="9" fill="none" stroke="#ccc" aria-hidden="true"><path d="M7.500 0 .5 4.500 7.500 9" /></svg>
              </div>
            </div>
            <div className="h-2 bg-[#333]" />
          </div>
          <div className="flex w-[292px] shrink-0 flex-col justify-end">
            <div className="mb-[7px] flex items-center gap-0.5 pl-[3px] text-[10px] text-[#d8d8d8]">
              <button aria-label="Previous locator" className="flex size-[13px] items-center justify-center rounded-full border border-[#1c1c1c] bg-[#363636]"><svg width="7" height="7" fill="#eee" aria-hidden="true"><path d="M0 3.500 4 0V2.500H7V4.500H4V7z" /></svg></button>
              <button className="h-[13px] w-[30px] rounded-full border border-[#1c1c1c] bg-[#404040] leading-[11px]">Set</button>
              <button aria-label="Next locator" className="flex size-[13px] items-center justify-center rounded-full border border-[#1c1c1c] bg-[#363636]"><svg width="7" height="7" fill="#eee" aria-hidden="true"><path d="M7 3.500 3 0V2.500H0V4.500H3V7z" /></svg></button>
              <button aria-label="Lock envelopes" className="ml-0.5 flex h-[13px] w-6 items-center justify-center border border-[#1c1c1c] bg-[#1c55c8]"><svg width="7" height="8" aria-hidden="true"><path d="M0 3.500H7V8H0z" fill="#dde" /><path d="M1.500 4V2.500a2 2 0 0 1 4 0V4" fill="none" stroke="#dde" /></svg></button>
            </div>
            <div className="flex h-0.5"><div className="h-px w-3 bg-[#5cffe8]" /><div className="h-0.5 flex-1 bg-[#333]" /></div>
          </div>
        </div>
        <div className="flex h-1 shrink-0">
          <div className={"relative flex-1 border-b-2 border-[#333] " + grid}>
            {[184, 298, 412, 526, 640, 754].map((x) => <div key={x} className="absolute top-0 h-px w-7 bg-black" style={{ left: x }} />)}
          </div>
          <div className="w-[292px] border-x-2 border-b-2 border-[#333] bg-[#404040]" />
        </div>
        <div className="flex shrink-0 flex-col">
          {tracks.map((t) => <TrackRow key={t.name + t.num} track={t} />)}
        </div>
        <div className="relative mr-[292px]">
          <span className="absolute right-1 bottom-0 text-[18px] leading-5 font-bold text-[#222]">2/1</span>
        </div>
        <div className="mr-[292px]"><TimeRuler /></div>
        <Playhead />
        <div className="pointer-events-none absolute top-9 bottom-[17px] left-[868px] w-px bg-[#e8e8e8]" />
        <svg className="pointer-events-none absolute top-[53px] left-[752px] h-[5px] w-[124px]" aria-hidden="true"><path d="M-1 0H3V5zM117 0h4l-4 4z" /></svg>
        <svg className="pointer-events-none absolute bottom-3 left-[750px] h-[5px] w-[124px]" aria-hidden="true"><path d="M4 0V5H0zM118 0V5H122z" /></svg>
        <svg className="pointer-events-none absolute top-[234px] left-[944px]" width="13" height="20" aria-hidden="true">
          <path d="M.5.5V16L4.300 12.500 6.800 18.500 9.300 17.500 6.800 11.800H12z" fill="#fff" stroke="#000" />
        </svg>
      </div>
    </section>
  );
}

function SideStrip() {
  return (
    <aside className="-ml-[7px] flex w-7 shrink-0 flex-col items-end overflow-hidden">
      <div className="flex h-12 w-[21px] shrink-0 flex-col gap-1 rounded-bl-md bg-[#070707] pl-[7px]">
        <button aria-label="Arrangement view" className="flex size-[20px] shrink-0 items-center justify-center rounded-full bg-[#6a6a6a]">
          <svg width="13" height="12" stroke="#ff6a10" strokeWidth="2" aria-hidden="true"><path d="M0 2H13M0 6H13M0 10H13" /></svg>
        </button>
        <button aria-label="Session view" className="flex size-[20px] shrink-0 items-center justify-center rounded-full bg-[#6a6a6a]">
          <svg width="13" height="12" stroke="#151515" strokeWidth="2" aria-hidden="true"><path d="M2 0V12M6 0V12M10 0V12" /></svg>
        </button>
      </div>
      <div className="flex w-[21px] flex-1 flex-col items-end pt-2">
        <Triangle dir="up" className="h-2 w-[10px] text-[#333]" />
        <div className="flex w-[9px] flex-1 flex-col">
          <div className="flex-[248]" /><div className="flex-[331] bg-[#3d4042]" /><div className="flex-[158]" />
        </div>
        <Triangle dir="down" className="mb-[7px] h-[9px] w-[10px] text-[#333]" />
        <div className="mb-7 flex w-[11px] flex-col gap-[5px] text-[7px] font-bold text-[#6a2a00]">
          {["I·O", "R", "M", "D"].map((t) => (
            <button key={t} className={"flex size-[14px] items-center justify-center rounded-full " + (t === "D" ? "bg-[#1c1c1c] text-[#777]" : "bg-[#ff6a10]")}>{t}</button>
          ))}
        </div>
      </div>
    </aside>
  );
}

/* ---------- footer ---------- */

function Footer() {
  return (
    <footer className="mt-2 flex h-4 shrink-0 pl-[5px] text-[10px] font-bold text-[#d2d2d2]">
      <div className="w-7 shrink-0"><RoundIcon label="Show detail view"><Triangle dir="right" className="ml-0.5 h-3 w-2.5" /></RoundIcon></div>
      <div className="flex h-6 flex-1 items-start gap-[14px] rounded-t-md border-t-[4px] border-[#333] bg-[#404040] pl-2.5 leading-3 whitespace-nowrap">
        <span>Time Selection</span><span>Start: 113.1.1</span><span>End: 129.1.1</span>
        <span className="whitespace-pre">Length: 16.0.0{"  "}(Duration: 0:26:667)</span>
      </div>
      <div className="mx-2 h-6 w-[208px] shrink-0 rounded-t-md bg-[#333] px-[5px] pt-1">
        <svg viewBox="0 0 198 16" className="h-4 w-full" shapeRendering="crispEdges" aria-label="Clip overview">
          <path d="M0 0H107V16H0z" fill="#2a3a3e" /><path d="M107 0h91V16h-91z" fill="#2e2e2e" />
          {Array.from({ length: 14 }, (_, i) => (
            <path key={i} d={`M${i * 14} 2h14v2h-14zM${i * 14 + 8} 1h3v4h-3zM${i * 14 + 11} 2h2v3h-2zM${i * 14} 9h14v2h-14zM${i * 14 + 8} 8h3v4h-3zM${i * 14 + 11} 9h2v3h-2z`} fill={i < 8 ? "#4f8fa8" : "#8fdcff"} />
          ))}
        </svg>
      </div>
      <div className="flex h-6 w-[121px] shrink-0 items-start justify-between rounded-t-md border-t-[3px] border-[#333] bg-[#404040] pr-0.5 pl-[5px]">
        <span className="pt-1 leading-3">Serum_x64</span>
        <svg width="58" height="16" shapeRendering="crispEdges" aria-hidden="true">
          <path d="M0 0h19v16H0zM21 0h21v16H21zM44 0h14v16H44z" fill="#c4c4cc" />
          <path d="M4 3h10v6H4zM26 4h10v12H26zM45 4h12v12H45z" fill="#111" />
          <path d="M2 11h5v3H2zM10 11h7v3h-7zM22 4h3v10h-3z" fill="#666" /><path d="M38 4h3v2h-3zM38 8h3v2h-3z" fill="#4a8a5a" />
        </svg>
      </div>
      <div className="w-[23px] shrink-0 pl-2"><RoundIcon label="Hide detail view"><svg width="10" height="12" aria-hidden="true"><path d="M10 0V12L0 6z" /></svg></RoundIcon></div>
    </footer>
  );
}

export default function App() {
  return (
    <div className="flex h-screen flex-col overflow-hidden bg-[#070707] font-['Liberation_Sans',Arial,sans-serif] select-none">
      <TitleBar />
      <MenuBar />
      <Transport />
      <main className="flex min-h-0 flex-1 pl-[5px]">
        <Browser />
        <div className="w-2 shrink-0" />
        <div className="flex min-w-0 flex-1 rounded-l-lg bg-[#575757]">
          <Arrangement />
          <SideStrip />
        </div>
      </main>
      <Footer />
    </div>
  );
}
